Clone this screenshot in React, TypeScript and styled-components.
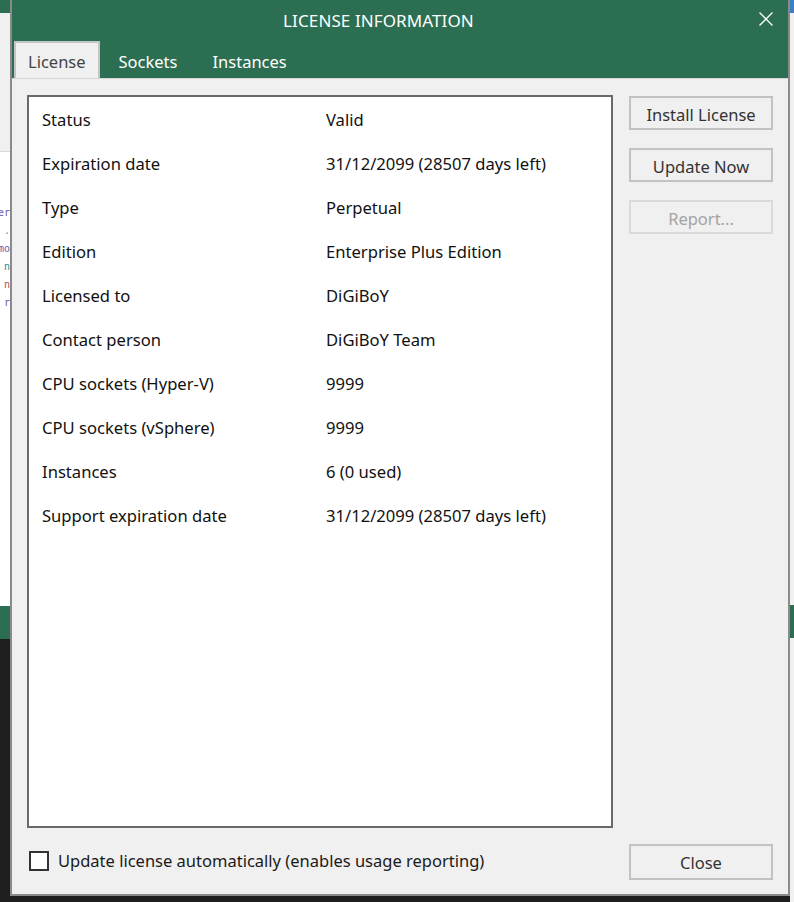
import React from "react";
import styled, { createGlobalStyle } from "styled-components";

const GlobalStyle = createGlobalStyle`
  html, body { margin: 0; padding: 0; background: #1e1e1e; }
  body { font-family: "Noto Sans", "Open Sans", sans-serif; }
  * { box-sizing: border-box; }
`;

const GREEN = "#2c6e51";

const Desktop = styled.div`
  width: 794px;
  height: 902px;
  display: grid;
  grid-template-columns: 10px 780px 4px;
  overflow: hidden;
`;

const SideStrip = styled.div`
  display: flex;
  flex-direction: column;
  overflow: hidden;
`;

const Band = styled.div<{ $h: number; $bg: string }>`
  height: ${(p) => p.$h}px;
  flex: 0 0 auto;
  background: ${(p) => p.$bg};
`;

const FillBand = styled.div<{ $bg: string }>`
  flex: 1 1 auto;
  background: ${(p) => p.$bg};
`;

const Fragments = styled.div`
  height: 455px;
  background: #ffffff;
  border-top: 1px solid #d8d8d8;
  padding-top: 52px;
  display: flex;
  flex-direction: column;
  align-items: flex-end;
  font-family: "DejaVu Sans Mono", monospace;
  font-size: 10px;
  line-height: 18px;
  white-space: nowrap;
`;

const Frag = styled.span<{ $c: string }>`
  color: ${(p) => p.$c};
`;

const MiddleCol = styled.div`
  display: flex;
  flex-direction: column;
`;

const Dialog = styled.div`
  height: 896px;
  display: flex;
  flex-direction: column;
  background: #f0f0f0;
  border-left: 2px solid #8a8a8a;
  border-right: 2px solid #8a8a8a;
  border-bottom: 2px solid #8a8a8a;
`;

const TitleBar = styled.div`
  height: 41px;
  background: ${GREEN};
  display: flex;
  align-items: center;
  justify-content: center;
  padding-right: 43px;
  position: relative;
  color: #ffffff;
  font-size: 17px;
  letter-spacing: 0.1px;
`;

const CloseX = styled.button`
  position: absolute;
  right: 14px;
  top: 11px;
  width: 16px;
  height: 16px;
  padding: 0;
  border: 0;
  background: transparent;
  display: flex;
`;

const TabRow = styled.div`
  height: 37px;
  background: ${GREEN};
  display: flex;
  align-items: flex-end;
  padding-left: 2px;
`;

const Tab = styled.div<{ $active?: boolean }>`
  height: ${(p) => (p.$active ? "37px" : "36px")};
  padding: 2px ${(p) => (p.$active ? "12px" : "17px")} 0;
  margin-right: ${(p) => (p.$active ? "2px" : "1px")};
  display: flex;
  align-items: center;
  font-size: 16.5px;
  color: ${(p) => (p.$active ? "#444444" : "#ffffff")};
  background: ${(p) => (p.$active ? "#f0f0f0" : "transparent")};
  border: ${(p) => (p.$active ? "2px solid #c4c4c4" : "0")};
  border-bottom: 0;
`;

const Content = styled.div`
  flex: 1;
  border-top: 1px solid #d6d6d6;
  display: flex;
  flex-direction: column;
  padding: 16px 15px 14px 15px;
`;

const Main = styled.div`
  flex: 1;
  display: grid;
  grid-template-columns: 586px 144px;
  column-gap: 16px;
`;

const ListBox = styled.div`
  height: 733px;
  background: #ffffff;
  border: 2px solid #696969;
  padding: 0 0 0 13px;
`;

const Row = styled.div`
  display: grid;
  grid-template-columns: 284px 1fr;
  height: 44px;
  align-items: center;
  font-size: 16.6px;
  color: #111111;
`;

const Side = styled.div`
  padding-top: 1px;
  display: flex;
  flex-direction: column;
  gap: 18px;
`;

const Btn = styled.button<{ $disabled?: boolean }>`
  width: 144px;
  height: 34px;
  font-family: inherit;
  font-size: 16.5px;
  color: ${(p) => (p.$disabled ? "#a3a3a3" : "#333333")};
  background: #f0f0f0;
  border: 2px solid ${(p) => (p.$disabled ? "#dadada" : "#c2c2c2")};
  padding: 3px 0 0 0;
  display: flex;
  align-items: center;
  justify-content: center;
`;

const Footer = styled.div`
  height: 52px;
  display: flex;
  align-items: flex-end;
  justify-content: space-between;
`;

const CheckLabel = styled.label`
  display: flex;
  align-items: center;
  gap: 9px;
  margin-left: 2px;
  margin-bottom: 8px;
  font-size: 16.5px;
  color: #1a1a1a;
`;

const Box = styled.span`
  width: 20px;
  height: 20px;
  border: 2px solid #333333;
  background: #ffffff;
`;

const CloseBtn = styled(Btn)`
  height: 36px;
  padding-top: 0;
`;

const Bottom = styled.div`
  height: 6px;
  background: #1e1e1e;
`;

const rows: [string, string][] = [
  ["Status", "Valid"],
  ["Expiration date", "31/12/2099 (28507 days left)"],
  ["Type", "Perpetual"],
  ["Edition", "Enterprise Plus Edition"],
  ["Licensed to", "DiGiBoY"],
  ["Contact person", "DiGiBoY Team"],
  ["CPU sockets (Hyper-V)", "9999"],
  ["CPU sockets (vSphere)", "9999"],
  ["Instances", "6 (0 used)"],
  ["Support expiration date", "31/12/2099 (28507 days left)"],
];

export default function App() {
  return (
    <>
      <GlobalStyle />
      <Desktop>
        <SideStrip>
          <Band $h={13} $bg={GREEN} />
          <Band $h={138} $bg="#f0f0f0" />
          <Fragments>
            <Frag $c="#6a5aa8">er</Frag>
            <Frag $c="#3fa3d8">.</Frag>
            <Frag $c="#6a5aa8">mo</Frag>
            <Frag $c="#2b8a8a">n</Frag>
            <Frag $c="#b05050">r n</Frag>
            <Frag $c="#6a5aa8">r</Frag>
          </Fragments>
          <Band $h={33} $bg={GREEN} />
          <FillBand $bg="#1e1e1e" />
        </SideStrip>
        <MiddleCol>
          <Dialog>
            <TitleBar>
              LICENSE INFORMATION
              <CloseX aria-label="Close">
                <svg width="16" height="16" viewBox="0 0 16 16">
                  <path d="M1.5 1.5 L14.5 14.5 M14.5 1.5 L1.5 14.5" stroke="#ffffff" strokeWidth="1.3" fill="none" />
                </svg>
              </CloseX>
            </TitleBar>
            <TabRow>
              <Tab $active>License</Tab>
              <Tab>Sockets</Tab>
              <Tab>Instances</Tab>
            </TabRow>
            <Content>
              <Main>
                <ListBox>
                  {rows.map(([k, v]) => (
                    <Row key={k}>
                      <span>{k}</span>
                      <span>{v}</span>
                    </Row>
                  ))}
                </ListBox>
                <Side>
                  <Btn>Install License</Btn>
                  <Btn>Update Now</Btn>
                  <Btn $disabled>Report...</Btn>
                </Side>
              </Main>
              <Footer>
                <CheckLabel>
                  <Box />
                  Update license automatically (enables usage reporting)
                </CheckLabel>
                <CloseBtn>Close</CloseBtn>
              </Footer>
            </Content>
          </Dialog>
          <Bottom />
        </MiddleCol>
        <SideStrip>
          <Band $h={13} $bg="#3b7fc4" />
          <Band $h={592} $bg="#f0f0f0" />
          <Band $h={33} $bg={GREEN} />
          <FillBand $bg="#f0f0f0" />
        </SideStrip>
      </Desktop>
    </>
  );
}
